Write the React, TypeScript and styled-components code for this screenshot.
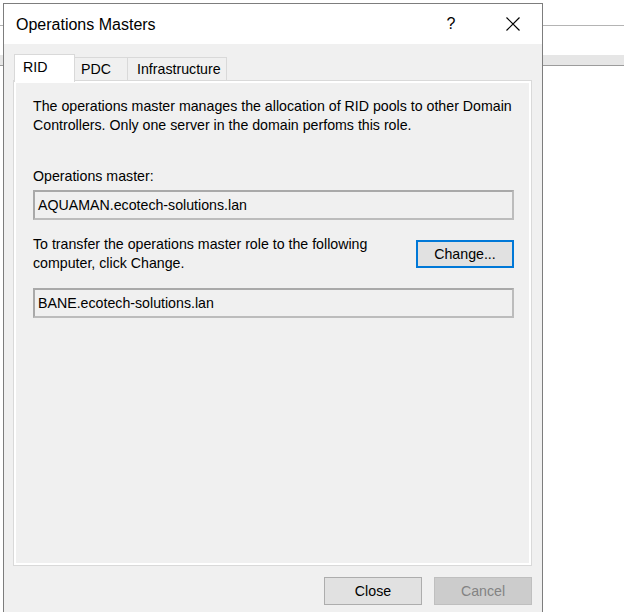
import React from "react";
import styled, { createGlobalStyle } from "styled-components";

const Global = createGlobalStyle`
  html, body { margin: 0; padding: 0; }
  body {
    width: 624px;
    height: 612px;
    overflow: hidden;
    font-family: "Liberation Sans", Arial, sans-serif;
    background:
      linear-gradient(#b4b4b4, #b4b4b4) 0 25px / 100% 1px no-repeat,
      linear-gradient(#9c9c9c, #9c9c9c) 0 65px / 100% 1px no-repeat,
      linear-gradient(#e6e6e6, #e6e6e6) 0 55px / 100% 10px no-repeat,
      #ffffff;
  }
`;

const Window = styled.div`
  box-sizing: border-box;
  margin: 3px 0 0 3px;
  width: 540px;
  height: 609px;
  border: 1px solid #7d7d7d;
  border-bottom: none;
  background: #f0f0f0;
  display: flex;
  flex-direction: column;
  overflow: hidden;
`;

const TitleBar = styled.div`
  height: 40px;
  flex: none;
  background: #ffffff;
  display: flex;
  align-items: center;
  padding-left: 12px;
`;

const Title = styled.div`
  flex: 1;
  font-size: 16px;
  color: #000;
  padding-top: 1px;
`;

const CaptionButton = styled.div<{ $shift?: number }>`
  width: 59px;
  height: 40px;
  display: flex;
  align-items: center;
  justify-content: center;
  padding-right: ${(p) => p.$shift ?? 0}px;
  box-sizing: border-box;
  font-size: 16px;
  color: #000;
`;

const Body = styled.div`
  padding: 10px 10px 0 9px;
  display: flex;
  flex-direction: column;
`;

const TabStrip = styled.div`
  display: flex;
  align-items: flex-end;
  height: 27px;
  padding-left: 1px;
  position: relative;
  z-index: 1;
  margin-bottom: -1px;
`;

const Tab = styled.div<{ $active?: boolean; $w: number; $pl: number }>`
  box-sizing: border-box;
  width: ${(p) => p.$w}px;
  height: ${(p) => (p.$active ? "28px" : "24px")};
  margin-bottom: ${(p) => (p.$active ? "-1px" : "0")};
  padding-left: ${(p) => p.$pl}px;
  padding-bottom: ${(p) => (p.$active ? "3px" : "0")};
  display: flex;
  align-items: center;
  white-space: nowrap;
  font-size: 14.2px;
  color: #000;
  background: ${(p) => (p.$active ? "#ffffff" : "#f0f0f0")};
  border: 1px solid #d9d9d9;
  border-bottom: ${(p) => (p.$active ? "none" : "1px solid #d9d9d9")};
  & + & { margin-left: -1px; }
`;

const Panel = styled.div`
  box-sizing: border-box;
  height: 486px;
  border: 1px solid #d9d9d9;
  background: #f0f0f0;
  box-shadow: inset 0 0 0 2px #ffffff;
  padding: 16px 17px 0 19px;
  display: flex;
  flex-direction: column;
`;

const Text = styled.div<{ $mt?: number }>`
  margin-top: ${(p) => p.$mt ?? 0}px;
  font-size: 14.2px;
  line-height: 19px;
  color: #000;
  white-space: nowrap;
`;

const Field = styled.div<{ $mt: number }>`
  box-sizing: border-box;
  margin-top: ${(p) => p.$mt}px;
  height: 30px;
  border: 2px solid #a9a9a9;
  border-right-color: #bcbcbc;
  border-bottom-color: #bcbcbc;
  background: #f0f0f0;
  display: flex;
  align-items: center;
  padding-left: 3px;
  font-size: 14.2px;
  color: #000;
`;

const TransferRow = styled.div`
  display: flex;
  justify-content: space-between;
  align-items: flex-start;
  margin-top: 15px;
`;

const Button = styled.div<{ $focus?: boolean; $disabled?: boolean; $mt?: number }>`
  box-sizing: border-box;
  margin-top: ${(p) => p.$mt ?? 0}px;
  width: 98px;
  height: 28px;
  display: flex;
  align-items: center;
  justify-content: center;
  font-size: 14.2px;
  background: ${(p) => (p.$disabled ? "#cccccc" : "#e1e1e1")};
  color: ${(p) => (p.$disabled ? "#838383" : "#000")};
  border: ${(p) =>
    p.$focus ? "2px solid #0078d7" : p.$disabled ? "1px solid #bfbfbf" : "1px solid #adadad"};
`;

const Footer = styled.div`
  display: flex;
  justify-content: flex-end;
  gap: 12px;
  margin-top: 11px;
`;

export default function App() {
  return (
    <>
      <Global />
      <Window>
        <TitleBar>
          <Title>Operations Masters</Title>
          <CaptionButton $shift={5}>?</CaptionButton>
          <CaptionButton>
            <svg width="14" height="14" viewBox="0 0 14 14">
              <path d="M0.5 0.5 L13.5 13.5 M13.5 0.5 L0.5 13.5" stroke="#000" strokeWidth="1.2" fill="none" />
            </svg>
          </CaptionButton>
        </TitleBar>
        <Body>
          <TabStrip>
            <Tab $active $w={61} $pl={8}>RID</Tab>
            <Tab $w={54} $pl={6}>PDC</Tab>
            <Tab $w={100} $pl={9}>Infrastructure</Tab>
          </TabStrip>
          <Panel>
            <Text>
              The operations master manages the allocation of RID pools to other Domain
              <br />
              Controllers. Only one server in the domain perfoms this role.
            </Text>
            <Text $mt={32}>Operations master:</Text>
            <Field $mt={4}>AQUAMAN.ecotech-solutions.lan</Field>
            <TransferRow>
              <Text>
                To transfer the operations master role to the following
                <br />
                computer, click Change.
              </Text>
              <Button $focus $mt={5}>Change...</Button>
            </TransferRow>
            <Field $mt={15}>BANE.ecotech-solutions.lan</Field>
          </Panel>
          <Footer>
            <Button>Close</Button>
            <Button $disabled>Cancel</Button>
          </Footer>
        </Body>
      </Window>
    </>
  );
}
